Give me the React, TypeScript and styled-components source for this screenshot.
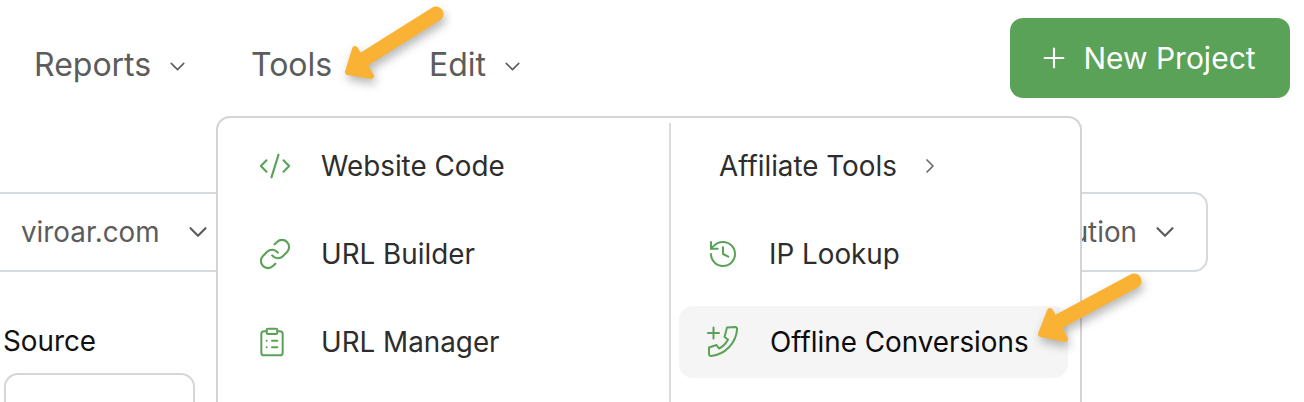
import React from 'react'
import styled, { createGlobalStyle } from 'styled-components'
import { ChevronDown, ChevronRight, ClipboardList, CodeXml, History, Link, Plus } from 'lucide-react'

const GREEN = '#5aa257'

const GlobalStyle = createGlobalStyle`
    html, body { margin: 0; padding: 0; background: #fff; }
    * { box-sizing: border-box; }
`

const Page = styled.div`
    position: relative;
    width: 1304px;
    height: 402px;
    overflow: hidden;
    background: #fff;
    font-family: Inter, "Liberation Sans", sans-serif;
`

const Header = styled.header`
    display: flex;
    align-items: flex-start;
    justify-content: space-between;
    height: 192px;
    padding: 18px 14px 0 34px;
`

const Nav = styled.nav`
    display: flex;
    align-items: center;
    height: 92px;
`

const NavItem = styled.div<{ $width: number }>`
    display: flex;
    align-items: center;
    gap: 14px;
    width: ${p => p.$width}px;
    font-size: 32px;
    color: #5c5c5c;
    svg { margin-top: 4px; }
`

const NewProject = styled.button`
    display: flex;
    align-items: center;
    justify-content: center;
    gap: 13px;
    width: 280px;
    height: 80px;
    padding: 0 6px 0 0;
    border: 0;
    border-radius: 13px;
    background: ${GREEN};
    color: #fff;
    font-family: inherit;
    font-size: 30px;
    font-weight: 400;
`

const Filters = styled.div`
    display: flex;
    justify-content: space-between;
    padding-right: 96px;
    margin-left: -20px;
`

const Select = styled.div<{ $end?: boolean }>`
    display: flex;
    align-items: center;
    justify-content: ${p => (p.$end ? 'flex-end' : 'flex-start')};
    gap: ${p => (p.$end ? 13 : 23)}px;
    width: 300px;
    height: 80px;
    padding: 0 26px 0 39px;
    border: 2px solid #d6d9de;
    border-radius: 14px;
    font-size: 27.8px;
    color: #5c5c5c;
`

const SourceField = styled.div`
    padding: 52px 0 0 3px;
`

const SourceLabel = styled.div`
    font-size: 27.8px;
    line-height: 34px;
    color: #111;
`

const SourceInputs = styled.div`
    display: flex;
    gap: 21px;
    margin-top: 15px;
    margin-left: 1px;
`

const SourceInput = styled.div`
    width: 191px;
    height: 70px;
    border: 2px solid #d6d6d6;
    border-radius: 14px;
`

const Menu = styled.div`
    position: absolute;
    top: 116px;
    left: 216px;
    display: grid;
    grid-template-columns: 453px 1fr;
    width: 866px;
    height: 330px;
    padding-top: 5px;
    background: #fff;
    border: 2px solid #d4d4d4;
    border-radius: 14px;
`

const Column = styled.div<{ $divided?: boolean }>`
    display: flex;
    flex-direction: column;
    gap: 16px;
    padding: 7px 12px 0 ${p => (p.$divided ? '8px' : '0')};
    border-right: ${p => (p.$divided ? '0' : '2px solid #dcdcdc')};
`

const Row = styled.div<{ $active?: boolean; $inset: number; $gap: number }>`
    display: flex;
    align-items: center;
    gap: ${p => p.$gap}px;
    height: 72px;
    padding-left: ${p => p.$inset}px;
    border-radius: 14px;
    font-size: 27.8px;
    color: ${p => (p.$active ? '#0c0c0c' : '#2d2d2d')};
    background: ${p => (p.$active ? '#f5f5f5' : 'transparent')};
    svg { flex: none; color: ${GREEN}; }
`

const MutedChevron = styled(ChevronRight)`
    && { color: #6a6a6a; margin-left: 21px; }
`

const ArrowLayer = styled.svg`
    position: absolute;
    inset: 0;
    width: 1304px;
    height: 402px;
    pointer-events: none;
    filter: drop-shadow(2px 5px 5px rgba(0, 0, 0, 0.28));
`

const PhonePlus = () => (
    <svg width="32" height="32" viewBox="0 0 32 32" fill="none" stroke="currentColor" strokeWidth="2" strokeLinecap="round" strokeLinejoin="round">
        <path d="M1 7h11M6.500 1.500v11" />
        <path d="M20 1.500l8.200-.5c1.200 0 2 .9 1.900 2.100C29.200 17 18 28.600 4.200 30c-1.200.1-2.200-.8-2.200-2v-6.500l7.500-2.500 2.500 3.500c3.800-1.800 7-5 9-9l-3.500-2.500L20 1.500z" />
    </svg>
)

const Arrow = ({ tail, neck, head }: { tail: string; neck: string; head: string }) => (
    <g fill="#f9b233" stroke="#f9b233" strokeLinejoin="round" strokeLinecap="round">
        <path d={`M${tail}L${neck}`} fill="none" strokeWidth="15" />
        <polygon points={head} strokeWidth="6" />
    </g>
)

const App = () => (
    <Page>
        <GlobalStyle />
        <Header>
            <Nav>
                <NavItem $width={217}>Reports <ChevronDown size={25} strokeWidth={1.5} /></NavItem>
                <NavItem $width={178}>Tools</NavItem>
                <NavItem $width={120}>Edit <ChevronDown size={25} strokeWidth={1.5} /></NavItem>
            </Nav>
            <NewProject><Plus size={32} strokeWidth={1.6} /> New Project</NewProject>
        </Header>
        <Filters>
            <Select>viroar.com <ChevronDown size={30} strokeWidth={1.75} /></Select>
            <Select $end>Attribution <ChevronDown size={30} strokeWidth={1.75} /></Select>
        </Filters>
        <SourceField>
            <SourceLabel>Source</SourceLabel>
            <SourceInputs>
                <SourceInput />
                <SourceInput />
            </SourceInputs>
        </SourceField>
        <Menu>
            <Column>
                <Row $inset={40} $gap={29}><CodeXml size={34} strokeWidth={1.5} /> Website Code</Row>
                <Row $inset={40} $gap={29}><Link size={34} strokeWidth={1.5} /> URL Builder</Row>
                <Row $inset={38} $gap={33}><ClipboardList size={32} strokeWidth={1.5} /> URL Manager</Row>
            </Column>
            <Column $divided>
                <Row $inset={40} $gap={0}>Affiliate Tools <MutedChevron size={24} strokeWidth={1.75} /></Row>
                <Row $inset={28} $gap={30}><History size={32} strokeWidth={1.5} /> IP Lookup</Row>
                <Row $inset={28} $gap={31} $active><PhonePlus /> Offline Conversions</Row>
            </Column>
        </Menu>
        <ArrowLayer viewBox="0 0 1304 402">
            <Arrow tail="436,14" neck="358,63" head="348,72 355,49 371,76" />
            <Arrow tail="1134,281" neck="1054,324" head="1041,334 1050,311 1065,339" />
        </ArrowLayer>
    </Page>
)

export default App
